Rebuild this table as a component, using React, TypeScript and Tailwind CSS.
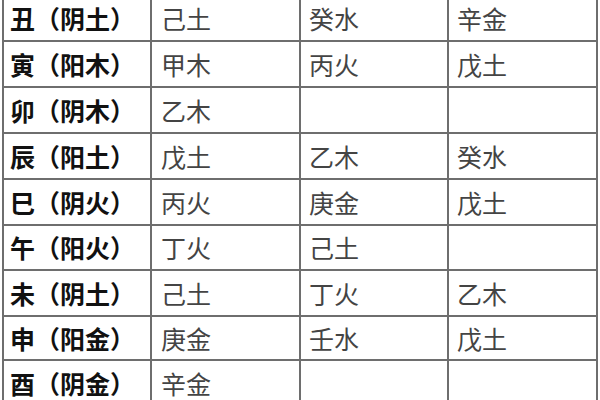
import React from "react";

const rows = [
  { h: "h-[46px]", cells: ["丑（阴土）", "己土", "癸水", "辛金"] },
  { h: "h-[46px]", cells: ["寅（阳木）", "甲木", "丙火", "戊土"] },
  { h: "h-[46px]", cells: ["卯（阴木）", "乙木", "", ""] },
  { h: "h-[46px]", cells: ["辰（阳土）", "戊土", "乙木", "癸水"] },
  { h: "h-[46px]", cells: ["巳（阴火）", "丙火", "庚金", "戊土"] },
  { h: "h-[45px]", cells: ["午（阳火）", "丁火", "己土", ""] },
  { h: "h-[46px]", cells: ["未（阴土）", "己土", "丁火", "乙木"] },
  { h: "h-[44px]", cells: ["申（阳金）", "庚金", "壬水", "戊土"] },
  { h: "h-[46px]", cells: ["酉（阴金）", "辛金", "", ""] },
];

export default function App() {
  return (
    <div
      className="h-[400px] w-[600px] overflow-hidden bg-white"
      style={{ fontFamily: "'Noto Sans CJK SC', 'Noto Sans', sans-serif" }}
    >
      <div className="ml-[2px] mt-[-4px] w-[596px] border-l-2 border-r-2 border-[#6e6e6e]">
        {rows.map((row, i) => (
          <div
            key={i}
            className={`grid grid-cols-[148px_149px_148px_147px] border-b-2 border-[#6e6e6e] ${row.h}`}
          >
            <div className="flex items-center border-r-2 border-[#6e6e6e] pl-[6px] text-[25px] font-bold leading-none text-[#111]">
              {row.cells[0]}
            </div>
            <div className="flex items-center border-r-2 border-[#6e6e6e] pl-[9px] text-[25px] leading-none text-[#444]">
              {row.cells[1]}
            </div>
            <div className="flex items-center border-r-2 border-[#6e6e6e] pl-[8px] text-[25px] leading-none text-[#444]">
              {row.cells[2]}
            </div>
            <div className="flex items-center pl-[8px] text-[25px] leading-none text-[#444]">
              {row.cells[3]}
            </div>
          </div>
        ))}
      </div>
    </div>
  );
}
